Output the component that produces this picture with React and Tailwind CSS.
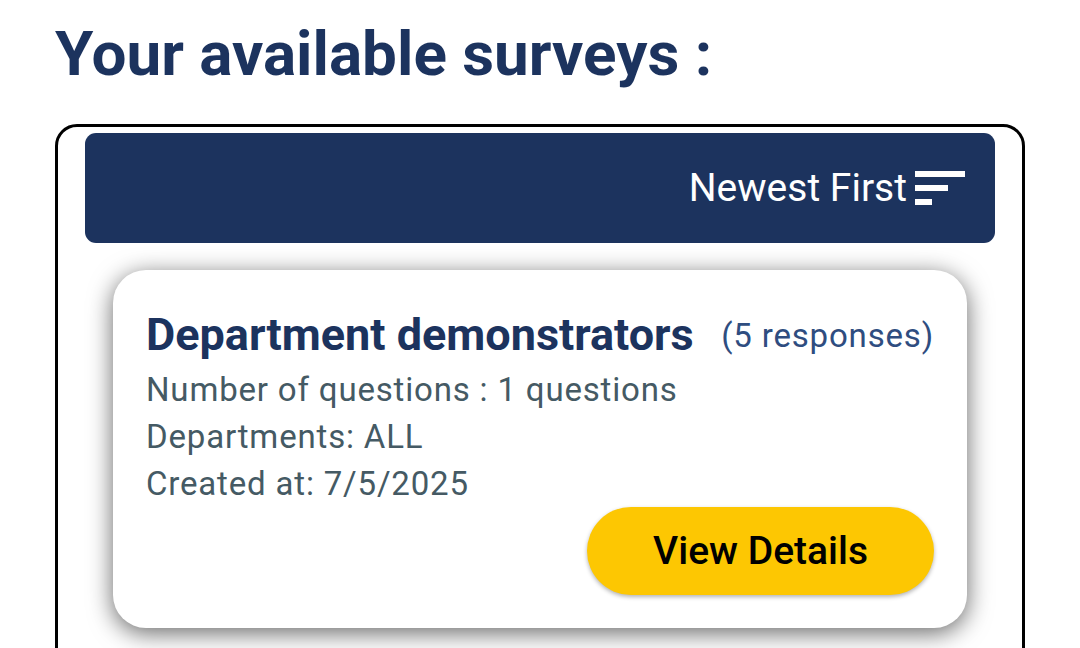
export default function App() {
  return (
    <main className="h-screen overflow-hidden bg-white px-[55px] font-[Roboto,sans-serif]">
      <h1 className="pt-[18px] text-[62px] leading-[72px] font-bold text-[#1c335e]">Your available surveys :</h1>
      <section className="mt-[34px] min-h-screen rounded-[22px] border-[3px] border-black px-[27px] pt-[6px]">
        <div className="flex h-[110px] items-center justify-end rounded-[11px] bg-[#1c335e] px-[30px]">
          <button type="button" className="flex items-center gap-2 text-[39px] leading-[46px] text-white">
            Newest First
            <svg viewBox="0 0 50 34" className="h-[34px] w-[50px]" fill="currentColor" aria-hidden="true">
              <path d="M0 0h50v6H0zM0 14h33v6H0zM0 28h17v6H0z" />
            </svg>
          </button>
        </div>
        <article className="mx-[28px] mt-[27px] rounded-[33px] bg-white px-[33px] pt-[38px] pb-[33px] shadow-[0_5px_24px_rgba(0,0,0,0.6)]">
          <div className="flex items-center justify-between">
            <h2 className="text-[45px] leading-[54px] font-bold text-[#1c335e]">Department demonstrators</h2>
            <span className="text-[33px] leading-[47px] tracking-wide text-[#2f4d80]">(5 responses)</span>
          </div>
          <div className="mt-1 text-[33px] leading-[47px] tracking-wide text-[#455a64]">
            <p>Number of questions : 1 questions</p>
            <p>Departments: ALL</p>
            <p>Created at: 7/5/2025</p>
          </div>
          <div className="flex justify-end">
            <button type="button" className="h-[88px] rounded-full bg-[#fdc702] px-[66px] text-[39px] font-medium text-black shadow-[0_2px_4px_rgba(0,0,0,0.3)]">View Details</button>
          </div>
        </article>
      </section>
    </main>
  );
}
